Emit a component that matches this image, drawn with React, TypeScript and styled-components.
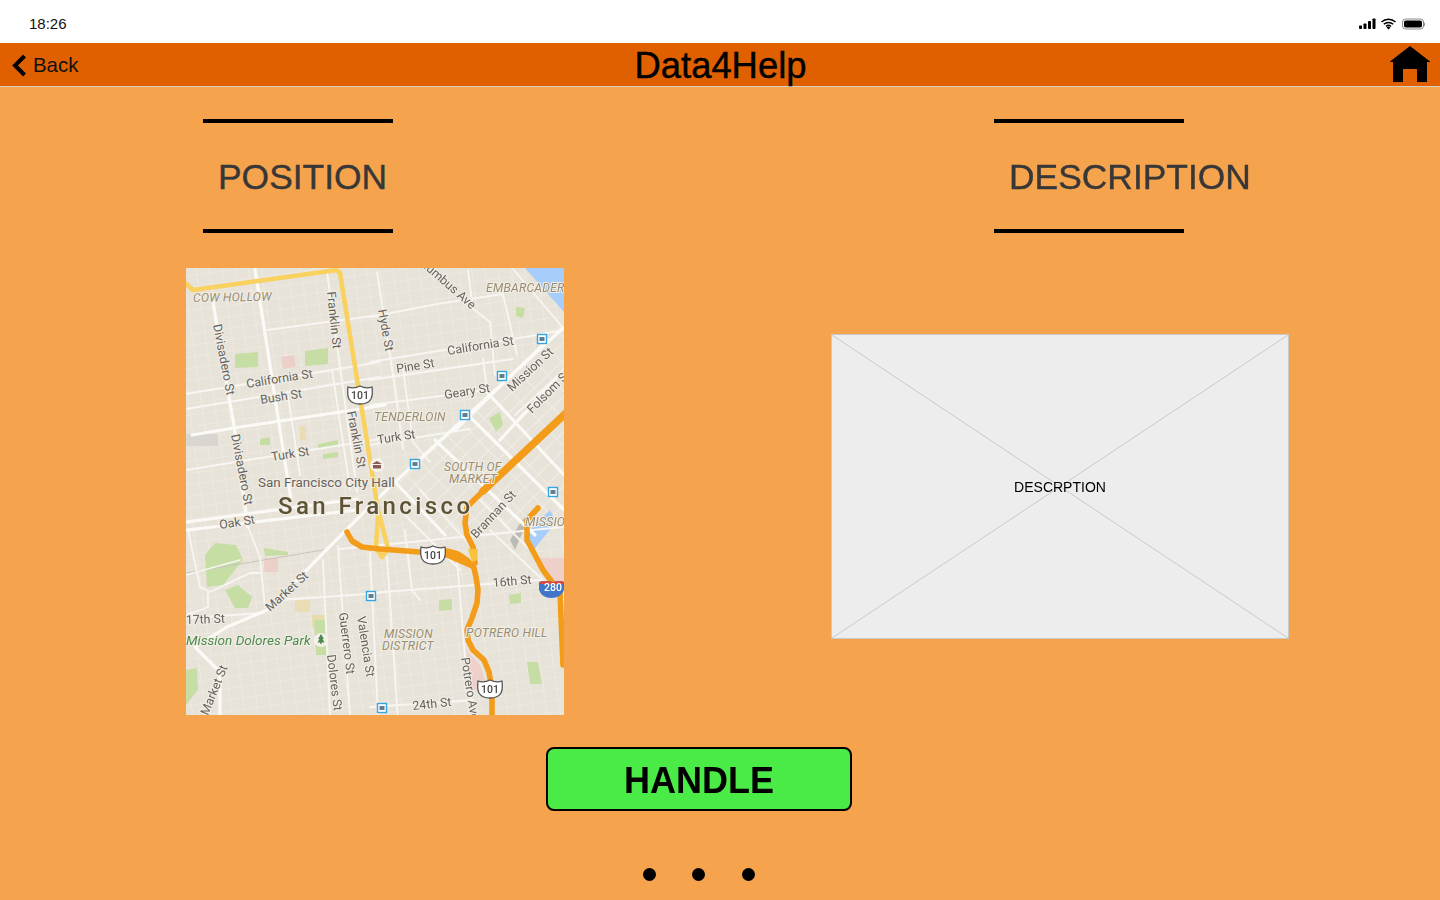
import React from "react";
import styled, { createGlobalStyle } from "styled-components";

const Global = createGlobalStyle`
  html, body { margin: 0; padding: 0; background: #F6A34D; }
  body { font-family: "Liberation Sans", Arial, sans-serif; }
`;

const Page = styled.div`
  width: 1440px;
  height: 900px;
  overflow: hidden;
  display: flex;
  flex-direction: column;
  background: #f6a34d;
`;
const StatusBar = styled.div`
  height: 43px;
  flex: none;
  background: #fff;
  display: flex;
  align-items: center;
  justify-content: space-between;
  padding: 4px 15px 0 29px;
  box-sizing: border-box;
  font-size: 15px;
  color: #111;
`;
const StatusIcons = styled.svg`
  display: block;
`;
const NavBar = styled.div`
  height: 44px;
  flex: none;
  box-sizing: border-box;
  background: #e06000;
  border-bottom: 1px solid #d6cdc4;
  display: grid;
  grid-template-columns: 1fr auto 1fr;
  align-items: center;
  padding: 0 10px 0 11px;
`;
const BackLink = styled.div`
  display: flex;
  align-items: center;
  gap: 6px;
  font-size: 20.4px;
  color: #111;
`;
const Title = styled.div`
  font-size: 36.4px;
  line-height: 44px;
  padding-top: 1px;
  color: #000;
  -webkit-text-stroke: 0.45px #000;
`;
const HomeIcon = styled.svg`
  justify-self: end;
  display: block;
  margin-top: -3px;
`;
const Columns = styled.div`
  display: flex;
  align-items: flex-start;
  padding: 32px 0 0 186px;
  height: 660px;
  box-sizing: border-box;
  flex: none;
`;
const LeftColumn = styled.div`
  width: 645px;
  flex: none;
  display: flex;
  flex-direction: column;
`;
const RightColumn = styled.div`
  width: 458px;
  flex: none;
  display: flex;
  flex-direction: column;
`;
const Heading = styled.div<{ $indent: number }>`
  width: 190px;
  height: 114px;
  margin-left: ${(p) => p.$indent}px;
  box-sizing: border-box;
  border-top: 4px solid #000;
  border-bottom: 4px solid #000;
  display: flex;
  align-items: center;
  padding: 2px 0 0 15px;
  font-size: 35.4px;
  color: #373737;
  white-space: nowrap;
  -webkit-text-stroke: 0.4px #373737;
`;
const MapFrame = styled.svg`
  display: block;
  width: 378px;
  height: 447px;
  margin-top: 35px;
`;
const MapLayer = styled.g`
  filter: blur(0.5px);
`;
const Placeholder = styled.div`
  position: relative;
  width: 458px;
  height: 305px;
  margin-top: 101px;
  box-sizing: border-box;
  background: #ededed;
  border: 1px solid #c9c9c9;
  display: flex;
  align-items: center;
  justify-content: center;
  font-size: 14px;
  color: #000;
`;
const Cross = styled.svg`
  position: absolute;
  inset: 0;
  width: 100%;
  height: 100%;
`;
const PlaceholderLabel = styled.span`
  position: relative;
`;
const ButtonRow = styled.div`
  display: flex;
  padding-left: 546px;
  flex: none;
`;
const HandleButton = styled.button`
  width: 306px;
  height: 64px;
  box-sizing: border-box;
  background: #4aea47;
  border: 2px solid #000;
  border-radius: 8px;
  padding: 4px 0 0;
  font-family: inherit;
  font-weight: 700;
  font-size: 36px;
  color: #000;
`;
const Dots = styled.div`
  display: flex;
  gap: 36px;
  padding: 57px 0 0 643px;
`;
const Dot = styled.span`
  width: 13px;
  height: 13px;
  border-radius: 50%;
  background: #000;
  &:last-child {
    margin-left: 1px;
  }
`;

const RoadLine = styled.polyline<{ $w: number; $c: string }>`
  fill: none;
  stroke: ${(p) => p.$c};
  stroke-width: ${(p) => p.$w};
  stroke-linecap: round;
  stroke-linejoin: round;
`;
type LabelKind = "street" | "area" | "park" | "poi";
const sizes: Record<LabelKind, number> = { street: 12.3, area: 12.2, park: 13.6, poi: 13.4 };
const Label = styled.text<{ $kind?: LabelKind }>`
  font-family: Roboto, "Liberation Sans", sans-serif;
  font-size: ${(p) => sizes[p.$kind ?? "street"]}px;
  font-style: ${(p) => (p.$kind === "area" || p.$kind === "park" ? "italic" : "normal")};
  fill: ${(p) => (p.$kind === "area" ? "#9a8d70" : p.$kind === "park" ? "#4c8a4b" : "#66625a")};
  stroke: #f1eee7;
  stroke-width: 2px;
  paint-order: stroke;
  letter-spacing: ${(p) => (p.$kind === "area" ? "0.2px" : "0")};
`;
const CityLabel = styled.text`
  font-family: Roboto, "Liberation Sans", sans-serif;
  font-size: 24px;
  font-weight: 500;
  letter-spacing: 3.4px;
  fill: #5e5235;
  stroke: #efece4;
  stroke-width: 2.5px;
  paint-order: stroke;
`;
const ShieldText = styled.text<{ $light?: boolean }>`
  font-family: Roboto, "Liberation Sans", sans-serif;
  font-size: 10.5px;
  font-weight: 500;
  text-anchor: middle;
  fill: ${(p) => (p.$light ? "#fff" : "#444")};
`;

type Pts = [number, number][];
const pts = (p: Pts) => p.map((q) => q.join(",")).join(" ");

const thinRoads: Pts[] = [
  [[267, 330], [380, 315]],
  [[186, 394], [380, 362]],
  [[186, 409], [380, 377]],
  [[186, 470], [380, 439]],
  [[288, 395], [300, 475]],
  [[370, 317], [437, 304], [503, 294]],
  [[370, 362], [537, 335], [563, 330]],
  [[370, 380], [513, 359]],
  [[370, 405], [487, 390]],
  [[370, 445], [470, 429]],
  [[377, 272], [393, 375], [403, 449]],
  [[403, 369], [413, 442], [430, 462]],
  [[483, 359], [487, 392]],
  [[473, 309], [490, 322], [495, 375]],
  [[503, 294], [517, 355]],
  [[513, 269], [564, 329]],
  [[332, 370], [350, 489]],
  [[327, 272], [357, 492]],
  [[370, 593], [540, 580]],
  [[370, 707], [473, 700]],
  [[457, 560], [465, 657], [473, 717]],
  [[387, 557], [398, 720]],
  [[370, 553], [378, 715]],
  [[405, 530], [412, 590], [420, 600]],
  [[338, 547], [350, 715]],
  [[323, 560], [330, 715]],
  [[186, 618], [263, 613]],
  [[280, 600], [380, 593]],
  [[188, 530], [200, 587], [210, 592], [250, 573], [260, 573]],
  [[208, 592], [208, 607], [187, 615]],
  [[248, 527], [260, 557], [265, 607]],
  [[186, 575], [240, 560]],
  [[340, 549], [563, 527]],
  [[490, 530], [564, 600]],
  [[473, 309], [468, 270]],
  [[400, 510], [460, 570]],
  [[420, 490], [470, 545]],
  [[480, 500], [530, 550]],
  [[515, 415], [564, 370]],
  [[536, 440], [564, 412]],
];
const mainRoads: Pts[] = [
  [[255, 269], [283, 449], [291, 500]],
  [[213, 302], [235, 432], [243, 492], [248, 527]],
  [[192, 435], [240, 427], [340, 412], [385, 405]],
  [[187, 522], [357, 499]],
  [[187, 530], [357, 510]],
  [[563, 328], [395, 482], [363, 513], [267, 610], [227, 627], [195, 647], [220, 672], [220, 715]],
  [[487, 392], [564, 475]],
  [[465, 412], [564, 510]],
  [[435, 440], [535, 535]],
  [[395, 482], [445, 535]],
  [[548, 340], [455, 430]],
  [[564, 370], [500, 440]],
];
const orangeRoads: Pts[] = [
  [[347, 532], [352, 541], [362, 547], [380, 549], [420, 552], [447, 551], [458, 554], [467, 560], [474, 568], [476, 577], [478, 590], [477, 603], [472, 618], [467, 630], [468, 640], [473, 650], [484, 660], [489, 672], [492, 690], [492, 715]],
  [[447, 555], [470, 565]],
  [[473, 547], [467, 535], [465, 523], [467, 507], [483, 491], [517, 459]],
  [[473, 547], [475, 563]],
  [[538, 508], [527, 520], [527, 540], [543, 570], [560, 593], [563, 665]],
];
const yellowRoads: Pts[] = [
  [[184, 282], [193, 290], [337, 270], [340, 273], [357, 379], [373, 479], [378, 510], [388, 548], [382, 557], [376, 548], [378, 515]],
];
const parks: Pts[] = [
  [[235, 354], [258, 352], [258, 367], [235, 368]],
  [[305, 351], [328, 348], [328, 364], [305, 366]],
  [[205, 555], [215, 543], [236, 545], [243, 560], [223, 585], [207, 587]],
  [[225, 590], [238, 585], [252, 597], [248, 608], [235, 608]],
  [[264, 548], [288, 552], [288, 555], [265, 556]],
  [[314, 620], [326, 620], [328, 655], [316, 655]],
  [[186, 670], [197, 668], [198, 690], [186, 705]],
  [[439, 600], [452, 599], [452, 610], [439, 611]],
  [[509, 595], [521, 593], [521, 603], [510, 604]],
  [[527, 662], [538, 662], [542, 684], [530, 684]],
  [[516, 307], [525, 308], [523, 318], [516, 316]],
  [[489, 418], [500, 412], [503, 425], [496, 432]],
  [[260, 439], [270, 437], [270, 445], [260, 445]],
  [[318, 444], [338, 440], [338, 447], [318, 449]],
  [[323, 454], [338, 452], [338, 457], [323, 459]],
];
const shields: [number, number][] = [[360, 395], [433, 555], [490, 689]];
const transit: [number, number][] = [[542, 339], [502, 376], [465, 415], [415, 464], [371, 596], [382, 708], [553, 492]];
const labels: { t: string; x: number; y: number; r?: number; k?: LabelKind }[] = [
  { t: "COW HOLLOW", x: 193, y: 302, r: -1, k: "area" },
  { t: "Franklin St", x: 327, y: 292, r: 84 },
  { t: "Divisadero St", x: 213, y: 325, r: 79 },
  { t: "Hyde St", x: 378, y: 310, r: 80 },
  { t: "Columbus Ave", x: 412, y: 258, r: 41 },
  { t: "EMBARCADERO", x: 486, y: 292, k: "area" },
  { t: "California St", x: 448, y: 355, r: -9 },
  { t: "Pine St", x: 397, y: 373, r: -9 },
  { t: "Geary St", x: 445, y: 399, r: -9 },
  { t: "Mission St", x: 512, y: 392, r: -43 },
  { t: "Folsom St", x: 532, y: 414, r: -45 },
  { t: "California St", x: 247, y: 388, r: -9 },
  { t: "Bush St", x: 261, y: 404, r: -9 },
  { t: "TENDERLOIN", x: 374, y: 421, k: "area" },
  { t: "Franklin St", x: 347, y: 412, r: 79 },
  { t: "Turk St", x: 378, y: 444, r: -9 },
  { t: "Turk St", x: 272, y: 461, r: -9 },
  { t: "Divisadero St", x: 231, y: 435, r: 79 },
  { t: "SOUTH OF", x: 444, y: 471, k: "area" },
  { t: "MARKET", x: 449, y: 483, k: "area" },
  { t: "San Francisco City Hall", x: 258, y: 487, k: "poi" },
  { t: "Oak St", x: 220, y: 529, r: -9 },
  { t: "MISSION", x: 525, y: 526, k: "area" },
  { t: "Brannan St", x: 476, y: 539, r: -47 },
  { t: "16th St", x: 493, y: 587, r: -5 },
  { t: "Market St", x: 270, y: 612, r: -42 },
  { t: "17th St", x: 186, y: 624, r: -2 },
  { t: "Mission Dolores Park", x: 186, y: 645, k: "park" },
  { t: "Guerrero St", x: 339, y: 613, r: 83 },
  { t: "Valencia St", x: 357, y: 617, r: 81 },
  { t: "Dolores St", x: 327, y: 655, r: 83 },
  { t: "MISSION", x: 384, y: 638, k: "area" },
  { t: "DISTRICT", x: 382, y: 650, k: "area" },
  { t: "POTRERO HILL", x: 466, y: 637, k: "area" },
  { t: "Potrero Ave", x: 461, y: 658, r: 81 },
  { t: "24th St", x: 413, y: 710, r: -6 },
  { t: "Market St", x: 208, y: 716, r: -68 },
];

const MapDrawing = () => (
  <MapFrame viewBox="186 268 378 447" role="img" aria-label="Map of San Francisco">
    <defs>
      <pattern id="blocks" width="13" height="11.5" patternUnits="userSpaceOnUse" patternTransform="rotate(-8)">
        <path d="M0 0H13M0 0V11.5" stroke="#f1eee8" strokeWidth="1.1" fill="none" />
      </pattern>
      <pattern id="soma" width="19" height="13" patternUnits="userSpaceOnUse" patternTransform="rotate(-44)">
        <path d="M0 0H19M0 0V13" stroke="#f4f1eb" strokeWidth="1.4" fill="none" />
      </pattern>
    </defs>
    <MapLayer>
      <rect x="186" y="268" width="378" height="447" fill="#e8e3d9" />
      <rect x="176" y="258" width="398" height="467" fill="url(#blocks)" />
      <polygon points="564,330 395,482 440,535 564,520" fill="#e8e3d9" />
      <polygon points="564,330 395,482 440,535 564,520" fill="url(#soma)" />
      <polygon points="525,268 564,268 564,312" fill="#a7cdfa" />
      <path d="M528 532L550 510L556 522L532 552Z" fill="#a7cdfa" />
      <path d="M510 540L522 520L530 515L515 550Z" fill="#bdbbb6" />
      <polygon points="538,558 564,558 564,590 550,585" fill="#eecfc9" />
      <polygon points="466,650 480,665 488,690 472,690" fill="#eecfc9" />
      <rect x="282" y="356" width="13" height="12" fill="#edcfc9" transform="rotate(-8 288 362)" />
      <rect x="264" y="558" width="14" height="14" fill="#edcfc9" />
      <rect x="186" y="434" width="32" height="12" fill="#d9d6d0" />
      <rect x="295" y="600" width="15" height="12" fill="#eadcb4" />
      <rect x="312" y="615" width="14" height="12" fill="#e6dcb0" />
      <rect x="300" y="426" width="6" height="14" fill="#eadcb4" />
      {parks.map((p, i) => (
        <polygon key={i} points={pts(p)} fill="#c6dda4" />
      ))}
      <RoadLine points="186,573 323,550" $w={1} $c="#c8c5bf" />
      {thinRoads.map((p, i) => (
        <RoadLine key={i} points={pts(p)} $w={1.8} $c="#f8f6f2" />
      ))}
      {mainRoads.map((p, i) => (
        <RoadLine key={i} points={pts(p)} $w={3.2} $c="#fbfaf7" />
      ))}
      {yellowRoads.map((p, i) => (
        <RoadLine key={i} points={pts(p)} $w={4.6} $c="#f8d15f" />
      ))}
      {orangeRoads.map((p, i) => (
        <RoadLine key={i} points={pts(p)} $w={5.6} $c="#f39c1a" />
      ))}
      <RoadLine points="483,491 517,459 566,413" $w={7.5} $c="#f39c1a" />
      <polygon points="468,549 478,549 477,560 472,562" fill="#f9c23c" />
      {labels.map((l, i) => (
        <Label key={i} x={l.x} y={l.y} $kind={l.k} transform={l.r ? `rotate(${l.r} ${l.x} ${l.y})` : undefined}>
          {l.t}
        </Label>
      ))}
      <CityLabel x="278" y="514">San Francisco</CityLabel>
      {shields.map(([x, y], i) => (
        <g key={i}>
          <path
            d={`M${x - 12} ${y - 8}q6 2 12 -1q6 3 12 1q1 8 -1 12q-3 5 -11 5q-8 0 -11 -5q-2 -4 -1 -12Z`}
            fill="#fff"
            stroke="#555"
            strokeWidth="1.3"
          />
          <ShieldText x={x} y={y + 4}>101</ShieldText>
        </g>
      ))}
      <path d="M539 582q7 -2 14 0q7 -2 11 0v8q-3 8 -13 8q-9 0 -12 -8Z" fill="#3f76c8" />
      <path d="M539 582q7 -2 14 0q7 -2 11 0v2h-25Z" fill="#d84a3e" />
      <ShieldText x="553" y="591" $light>280</ShieldText>
      {transit.map(([x, y], i) => (
        <g key={i}>
          <rect x={x - 4.5} y={y - 4.5} width="9" height="9" fill="#fff" stroke="#35a6e0" strokeWidth="1.4" />
          <rect x={x - 2.5} y={y - 2} width="5" height="4" fill="#5f7f90" />
        </g>
      ))}
      <circle cx="377" cy="465" r="7" fill="#f4f1ea" />
      <path d="M372 464l5 -3l5 3ZM373 465h8v3.5h-8Z" fill="#8a5a52" />
      <circle cx="321" cy="640" r="7" fill="#f4f1ea" />
      <path d="M321 634l3 5h-1.5l2 3.5h-7l2 -3.5h-1.5ZM320.3 642h1.4v2h-1.4Z" fill="#4c8a4b" />
    </MapLayer>
  </MapFrame>
);

export default function App() {
  return (
    <Page>
      <Global />
      <StatusBar>
        <span>18:26</span>
        <StatusIcons width="66" height="12" viewBox="0 0 66 12">
          <g fill="#000">
            <rect x="0" y="7.5" width="3" height="3.5" rx="0.7" />
            <rect x="4.5" y="5.5" width="3" height="5.5" rx="0.7" />
            <rect x="9" y="3" width="3" height="8" rx="0.7" />
            <rect x="13.5" y="0.5" width="3" height="10.5" rx="0.7" />
          </g>
          <path d="M22.5 4a10 10 0 0 1 14 0M24.8 6.3a6.8 6.8 0 0 1 9.4 0M27 8.5a3.6 3.6 0 0 1 5 0" fill="none" stroke="#000" strokeWidth="1.5" />
          <path d="M29.5 11.5l-1.9-2a2.7 2.7 0 0 1 3.8 0Z" fill="#000" />
          <rect x="43.5" y="1" width="21" height="10" rx="3" fill="none" stroke="#888" strokeWidth="1" />
          <rect x="45" y="2.5" width="18" height="7" rx="1.8" fill="#000" />
          <rect x="65" y="4.5" width="1" height="3.5" rx="0.5" fill="#999" />
        </StatusIcons>
      </StatusBar>
      <NavBar>
        <BackLink>
          <svg width="16" height="24" viewBox="0 0 16 24">
            <path d="M13.5 2L4 11.5L13.5 21" fill="none" stroke="#000" strokeWidth="4" />
          </svg>
          Back
        </BackLink>
        <Title>Data4Help</Title>
        <HomeIcon width="40" height="36" viewBox="0 0 40 36">
          <path d="M20 0L40 15.5V16H37V36H27V23H13V36H3V16H0V15.5Z" fill="#000" />
        </HomeIcon>
      </NavBar>
      <Columns>
        <LeftColumn>
          <Heading $indent={17}>POSITION</Heading>
          <MapDrawing />
        </LeftColumn>
        <RightColumn>
          <Heading $indent={163}>DESCRIPTION</Heading>
          <Placeholder>
            <Cross viewBox="0 0 456 303" preserveAspectRatio="none">
              <path d="M0 0L456 303M456 0L0 303" stroke="#c9c9c9" strokeWidth="1" fill="none" />
            </Cross>
            <PlaceholderLabel>DESCRPTION</PlaceholderLabel>
          </Placeholder>
        </RightColumn>
      </Columns>
      <ButtonRow>
        <HandleButton>HANDLE</HandleButton>
      </ButtonRow>
      <Dots>
        <Dot />
        <Dot />
        <Dot />
      </Dots>
    </Page>
  );
}
